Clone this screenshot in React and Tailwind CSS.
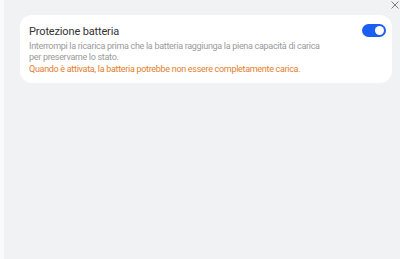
export default function App() {
  return (
    <div className="h-[259px] w-[400px] overflow-hidden bg-[#fafafb] pl-[4px] font-['Roboto',sans-serif]">
      <div className="relative h-full w-full bg-[#f1f2f4] pl-[16px] pr-[8px] pt-[15px]">
        <button
          type="button"
          className="absolute right-[1px] top-[1px] flex h-[8px] w-[8px] items-center justify-center text-[#7a7a7a]"
        >
          <svg viewBox="0 0 8 8" className="h-[8px] w-[8px]" fill="none" stroke="currentColor" strokeWidth="1">
            <path d="M0.5 0.5 L7.5 7.5 M7.5 0.5 L0.5 7.5" />
          </svg>
        </button>
        <div className="flex items-start justify-between rounded-[12px] bg-white pb-[8px] pl-[9px] pr-[6px] pt-[9px]">
          <div className="flex flex-col">
            <h3 className="text-[11px] leading-[15px] tracking-[-0.15px] text-[#333333]">Protezione batteria</h3>
            <p className="mt-[2px] text-[9px] leading-[11px] tracking-[-0.3px] text-[#9a9a9a]">
              Interrompi la ricarica prima che la batteria raggiunga la piena capacità di carica
              <br />
              per preservarne lo stato.
            </p>
            <p className="mt-[1px] text-[9px] leading-[11px] tracking-[-0.3px] text-[#e4802c]">
              Quando è attivata, la batteria potrebbe non essere completamente carica.
            </p>
          </div>
          <div className="flex h-[13px] w-[24px] shrink-0 items-center justify-end rounded-full bg-[#1b5ef2] pr-[2px]">
            <span className="h-[9px] w-[9px] rounded-full bg-white" />
          </div>
        </div>
      </div>
    </div>
  );
}
